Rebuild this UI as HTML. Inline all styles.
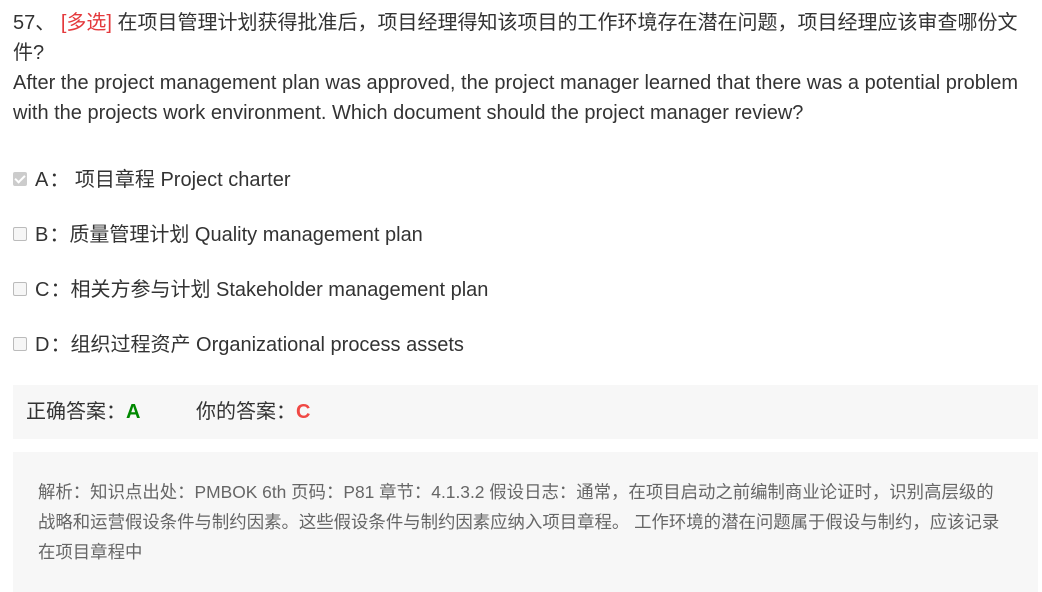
<!DOCTYPE html>
<html><head><meta charset="utf-8"><style>
body{margin:0;background:#fff;font-family:"Liberation Sans","Noto Sans CJK SC",sans-serif;color:#333;width:1042px;height:579px;overflow:hidden;position:relative}
.q{position:absolute;left:13px;top:8px;width:1010px;font-size:20px;line-height:30px}
.q .t{color:#e4393c}
.opt{position:absolute;left:13px;font-size:20px;line-height:30px;white-space:nowrap}
.cb{display:inline-block;width:12px;height:12px;border:1px solid #bbb;border-radius:2px;background:#f6f6f6;vertical-align:middle;margin-right:8px;position:relative;top:-2px}
.cb.on{background:#ccc;border-color:#ccc}
.cb.on:after{content:"";position:absolute;left:3px;top:0px;width:4px;height:8px;border:solid #fff;border-width:0 2px 2px 0;transform:rotate(45deg)}
.c{margin:0 0 0 1px}
.ans{position:absolute;left:13px;top:385px;width:1025px;height:54px;background:#f7f7f7;font-size:20px;line-height:54px}
.exp{position:absolute;left:13px;top:452px;width:1025px;height:140px;background:#f7f7f7;font-size:17.4px;line-height:30px;color:#666}
</style></head><body>
<div class="q">57、 <span class="t">[多选]</span> 在项目管理计划获得批准后，项目经理得知该项目的工作环境存在潜在问题，项目经理应该审查哪份文件?<br>After the project management plan was approved, the project manager learned that there was a potential problem with the projects work environment. Which document should the project manager review?</div>
<div class="opt" style="top:165px"><span class="cb on"></span>A<span class="c">：</span>&nbsp;项目章程 Project charter</div>
<div class="opt" style="top:220px"><span class="cb"></span>B<span class="c">：</span>质量管理计划 Quality management plan</div>
<div class="opt" style="top:275px"><span class="cb"></span>C<span class="c">：</span>相关方参与计划 Stakeholder management plan</div>
<div class="opt" style="top:330px"><span class="cb"></span>D<span class="c">：</span>组织过程资产 Organizational process assets</div>
<div class="ans"><span style="position:absolute;left:13px">正确答案：<b style="color:#080">A</b></span><span style="position:absolute;left:183px">你的答案：<b style="color:#f04844">C</b></span></div>
<div class="exp"><div style="position:absolute;left:25px;top:25px;width:968px">解析：知识点出处：PMBOK 6th 页码：P81 章节：4.1.3.2 假设日志：通常，在项目启动之前编制商业论证时，识别高层级的<br>战略和运营假设条件与制约因素。这些假设条件与制约因素应纳入项目章程。 工作环境的潜在问题属于假设与制约，应该记录<br>在项目章程中</div></div>
</body></html>
